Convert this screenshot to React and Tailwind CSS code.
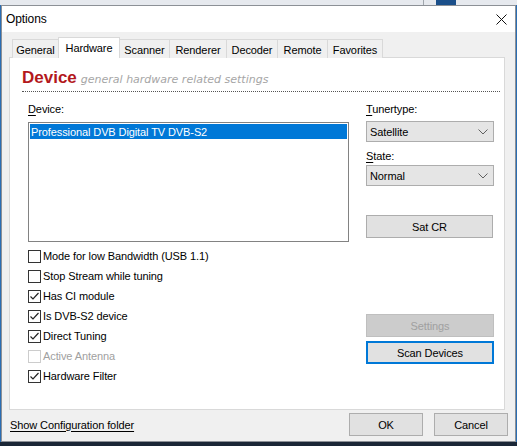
import React from "react";

function Chevron() {
  return (
    <svg width="10" height="6" viewBox="0 0 10 6" className="block">
      <path d="M0.5 0.5 L5 5 L9.5 0.5" fill="none" stroke="#606060" strokeWidth="1" />
    </svg>
  );
}

function Check({ checked, disabled, label }) {
  return (
    <div className="flex items-center h-[20px]">
      <div
        className={
          "w-[13px] h-[13px] border bg-white flex items-center justify-center " +
          (disabled ? "border-[#cccccc]" : "border-[#333333]")
        }
      >
        {checked && (
          <svg width="11" height="11" viewBox="0 0 11 11">
            <path d="M1.5 5.5 L4 8 L9.5 2" fill="none" stroke="#222" strokeWidth="1.2" />
          </svg>
        )}
      </div>
      <span className={"ml-[2px] " + (disabled ? "text-[#a0a0a0]" : "text-black")}>{label}</span>
    </div>
  );
}

function Combo({ value }) {
  return (
    <div className="w-[128px] h-[21px] bg-[#e5e5e5] border border-[#adadad] flex items-center justify-between pl-[3px] pr-[5px]">
      <span>{value}</span>
      <Chevron />
    </div>
  );
}

const tabs = [
  ["General", "w-[47px]"],
  ["Hardware", "w-[62px]"],
  ["Scanner", "w-[51px]"],
  ["Renderer", "w-[58px]"],
  ["Decoder", "w-[52px]"],
  ["Remote", "w-[51px]"],
  ["Favorites", "w-[56px]"],
];

export default function App() {
  return (
    <div className="w-[517px] h-[446px] bg-[#1a2636] overflow-hidden flex flex-col font-['Liberation_Sans',sans-serif] text-[11px] leading-[16px] tracking-[-0.1px] text-black">
      {/* top desktop strip */}
      <div className="h-[5px] bg-[#e6e9ee] flex shrink-0">
        <div className="w-[423px]" />
        <div className="w-[1px] bg-[#a0a6ad]" />
        <div className="w-[12px]" />
        <div className="w-[20px] bg-[#1b4f8a]" />
      </div>
      {/* window */}
      <div className="flex shrink-0 bg-[#2a6db3]">
        <div className="w-[1px]" />
        <div className="w-[515px] h-[437px] border border-[#8c9096] bg-[#f0f0f0] flex flex-col">
          {/* title bar */}
          <div className="h-[26px] bg-white flex items-center justify-between pl-[4px] pr-[8px] shrink-0">
            <span className="text-[12px]">Options</span>
            <svg width="11" height="11" viewBox="0 0 11 11">
              <path d="M0.5 0.5 L10.5 10.5 M10.5 0.5 L0.5 10.5" stroke="#111" strokeWidth="1" />
            </svg>
          </div>
          {/* client */}
          <div className="flex-1 flex flex-col">
            {/* tabs */}
            <div className="flex items-end ml-[10px] mt-[5px] h-[21px] relative z-10">
              {tabs.map(([t, w], i) =>
                t === "Hardware" ? (
                  <div
                    key={t}
                    className={
                      w +
                      " h-[21px] bg-white border border-b-0 border-[#d9d9d9] -ml-px flex justify-center items-start pt-[2px]"
                    }
                  >
                    {t}
                  </div>
                ) : (
                  <div
                    key={t}
                    className={
                      w +
                      " h-[19px] bg-[#f0f0f0] border border-b-0 border-[#d9d9d9] flex justify-center items-start pt-[2px] " +
                      (i === 0 ? "" : "-ml-px")
                    }
                  >
                    {t}
                  </div>
                )
              )}
            </div>
            {/* panel */}
            <div className="ml-[7px] w-[496px] h-[353px] -mt-px bg-white border border-[#d9d9d9] flex flex-col">
              <div className="ml-[12px] mt-[9px] h-[22px] flex items-baseline">
                <span className="text-[17px] leading-[22px] font-bold text-[#b3181c] tracking-[0px]">
                  Device
                </span>
                <span className="ml-[4px] text-[11px] italic text-[#a6a6a6] font-['DejaVu_Sans',sans-serif] tracking-[0px]">
                  general hardware related settings
                </span>
              </div>
              <div className="ml-[12px] mt-[2px] w-[478px] border-b border-dotted border-[#555]" />
              <div className="flex mt-[9px]">
                <div className="ml-[18px] w-[321px] flex flex-col">
                  <div className="h-[16px]">
                    <span className="underline underline-offset-2">D</span>evice:
                  </div>
                  <div className="mt-[5px] h-[120px] border border-[#828282] bg-white p-[1px]">
                    <div className="h-[15px] bg-[#0078d7] text-white flex items-center pl-[1px]">
                      Professional DVB Digital TV DVB-S2
                    </div>
                  </div>
                  <div className="mt-[4px] flex flex-col">
                    <Check label="Mode for low Bandwidth (USB 1.1)" />
                    <Check label="Stop Stream while tuning" />
                    <Check checked label="Has CI module" />
                    <Check checked label="Is DVB-S2 device" />
                    <Check checked label="Direct Tuning" />
                    <Check disabled label="Active Antenna" />
                    <Check checked label="Hardware Filter" />
                  </div>
                </div>
                <div className="ml-[17px] w-[128px] flex flex-col">
                  <div className="h-[16px]">
                    <span className="underline underline-offset-2">T</span>unertype:
                  </div>
                  <div className="mt-[4px]">
                    <Combo value="Satellite" />
                  </div>
                  <div className="mt-[6px] h-[16px]">
                    <span className="underline underline-offset-2">S</span>tate:
                  </div>
                  <div className="mt-[1px]">
                    <Combo value="Normal" />
                  </div>
                  <div className="mt-[29px] h-[23px] w-[127px] bg-[#e1e1e1] border border-[#adadad] flex items-center justify-center">
                    Sat CR
                  </div>
                  <div className="mt-[76px] h-[23px] w-[128px] bg-[#cccccc] border border-[#bfbfbf] flex items-center justify-center text-[#a0a0a0]">
                    Settings
                  </div>
                  <div className="mt-[4px] h-[23px] w-[128px] bg-[#e1e1e1] border-2 border-[#0078d7] flex items-center justify-center">
                    Scan Devices
                  </div>
                </div>
              </div>
            </div>
            {/* bottom */}
            <div className="flex items-center mt-[3px] h-[23px]">
              <span className="ml-[8px] underline underline-offset-2">Show Configuration folder</span>
              <div className="flex-1" />
              <div className="w-[74px] h-[23px] bg-[#e1e1e1] border border-[#adadad] flex items-center justify-center">
                OK
              </div>
              <div className="ml-[11px] w-[74px] h-[23px] bg-[#e1e1e1] border border-[#adadad] flex items-center justify-center mr-[7px]">
                Cancel
              </div>
            </div>
          </div>
        </div>
        <div className="w-[1px]" />
      </div>
    </div>
  );
}
